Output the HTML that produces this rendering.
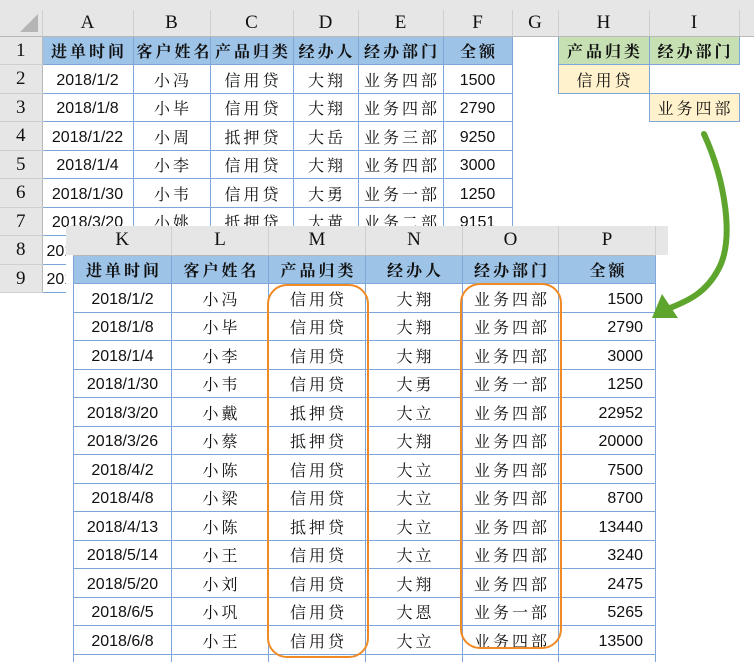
<!DOCTYPE html>
<html><head><meta charset="utf-8"><style>
*{margin:0;padding:0;box-sizing:border-box}
html,body{width:754px;height:662px;overflow:hidden}
body{background:#fff;position:relative;font-family:"Liberation Sans",sans-serif}
table{border-collapse:collapse;position:absolute;table-layout:fixed}
td{text-align:center;font-size:16px;color:#111;padding:0;padding-top:4px;white-space:nowrap;overflow:hidden}
td.cj{font-family:"Liberation Serif","Noto Serif CJK SC",serif;letter-spacing:3px;text-indent:3px;font-size:16px;padding-top:1px}
.b{font-weight:bold}
.ch td{background:#e6e6e6;font-family:"Liberation Serif",serif;font-size:19px;border-right:1px solid #cfcfcf;border-bottom:1px solid #b8b8b8;height:26px;padding-top:0}
td.rn{background:#e6e6e6;font-family:"Liberation Serif",serif;font-size:19px;padding-top:1px;border-bottom:1px solid #cfcfcf;border-right:1px solid #b8b8b8}
.t td.d{border:1px solid #7ea6d9}
.hb{background:#9dc3e6}
.r td{height:28.5px}
.num{text-align:right;padding-right:12px}
</style></head><body>
<div style="position:absolute;left:0;top:0;width:754px;height:10px;background:#e6e6e6"></div>
<table class="t" style="left:0;top:10px;width:754px">
<colgroup><col style="width:42px"><col style="width:91px"><col style="width:77px"><col style="width:83px"><col style="width:65px"><col style="width:85px"><col style="width:69px"><col style="width:46px"><col style="width:91px"><col style="width:90px"><col></colgroup>
<tr class="ch"><td style="position:relative"><div style="position:absolute;right:4px;bottom:4px;width:0;height:0;border-left:18px solid transparent;border-bottom:18px solid #b5b5b5"></div></td><td>A</td><td>B</td><td>C</td><td>D</td><td>E</td><td>F</td><td>G</td><td>H</td><td>I</td><td style="border-right:none"></td></tr>
<tr class="r"><td class="rn">1</td><td class="d hb cj b">进单时间</td><td class="d hb cj b">客户姓名</td><td class="d hb cj b">产品归类</td><td class="d hb cj b">经办人</td><td class="d hb cj b">经办部门</td><td class="d hb cj b">全额</td><td></td><td class="d cj b" style="background:#c6e0b4">产品归类</td><td class="d cj b" style="background:#c6e0b4">经办部门</td><td></td></tr>
<tr class="r"><td class="rn">2</td><td class="d">2018/1/2</td><td class="d cj">小冯</td><td class="d cj">信用贷</td><td class="d cj">大翔</td><td class="d cj">业务四部</td><td class="d">1500</td><td></td><td class="d cj" style="background:#fff2cc">信用贷</td><td></td><td></td></tr>
<tr class="r"><td class="rn">3</td><td class="d">2018/1/8</td><td class="d cj">小毕</td><td class="d cj">信用贷</td><td class="d cj">大翔</td><td class="d cj">业务四部</td><td class="d">2790</td><td></td><td></td><td class="d cj" style="background:#fff2cc">业务四部</td><td></td></tr>
<tr class="r"><td class="rn">4</td><td class="d">2018/1/22</td><td class="d cj">小周</td><td class="d cj">抵押贷</td><td class="d cj">大岳</td><td class="d cj">业务三部</td><td class="d">9250</td><td></td><td></td><td></td><td></td></tr>
<tr class="r"><td class="rn">5</td><td class="d">2018/1/4</td><td class="d cj">小李</td><td class="d cj">信用贷</td><td class="d cj">大翔</td><td class="d cj">业务四部</td><td class="d">3000</td><td></td><td></td><td></td><td></td></tr>
<tr class="r"><td class="rn">6</td><td class="d">2018/1/30</td><td class="d cj">小韦</td><td class="d cj">信用贷</td><td class="d cj">大勇</td><td class="d cj">业务一部</td><td class="d">1250</td><td></td><td></td><td></td><td></td></tr>
<tr class="r"><td class="rn">7</td><td class="d">2018/3/20</td><td class="d cj">小姚</td><td class="d cj">抵押贷</td><td class="d cj">大黄</td><td class="d cj">业务二部</td><td class="d">9151</td><td></td><td></td><td></td><td></td></tr>
<tr class="r"><td class="rn">8</td><td class="d" style="text-align:left;padding-left:4px">2018</td><td class="d"></td><td class="d"></td><td class="d"></td><td class="d"></td><td class="d"></td><td></td><td></td><td></td><td></td></tr>
<tr class="r"><td class="rn">9</td><td class="d" style="text-align:left;padding-left:4px">2018</td><td class="d"></td><td class="d"></td><td class="d"></td><td class="d"></td><td class="d"></td><td></td><td></td><td></td><td></td></tr>
</table>
<div style="position:absolute;left:66px;top:226px;width:602px;height:440px;background:#fff"></div>
<div style="position:absolute;left:66px;top:226px;width:602px;height:29px;background:#e6e6e6"></div>
<table class="t" style="left:73px;top:226px;width:582px">
<colgroup><col style="width:98px"><col style="width:97px"><col style="width:97px"><col style="width:97px"><col style="width:96px"><col style="width:97px"></colgroup>
<tr class="ch"><td style="height:29px">K</td><td>L</td><td>M</td><td>N</td><td>O</td><td>P</td></tr>
<tr class="r"><td class="d hb cj b">进单时间</td><td class="d hb cj b">客户姓名</td><td class="d hb cj b">产品归类</td><td class="d hb cj b">经办人</td><td class="d hb cj b">经办部门</td><td class="d hb cj b">全额</td></tr>
<tr class="r"><td class="d">2018/1/2</td><td class="d cj">小冯</td><td class="d cj">信用贷</td><td class="d cj">大翔</td><td class="d cj">业务四部</td><td class="d num">1500</td></tr>
<tr class="r"><td class="d">2018/1/8</td><td class="d cj">小毕</td><td class="d cj">信用贷</td><td class="d cj">大翔</td><td class="d cj">业务四部</td><td class="d num">2790</td></tr>
<tr class="r"><td class="d">2018/1/4</td><td class="d cj">小李</td><td class="d cj">信用贷</td><td class="d cj">大翔</td><td class="d cj">业务四部</td><td class="d num">3000</td></tr>
<tr class="r"><td class="d">2018/1/30</td><td class="d cj">小韦</td><td class="d cj">信用贷</td><td class="d cj">大勇</td><td class="d cj">业务一部</td><td class="d num">1250</td></tr>
<tr class="r"><td class="d">2018/3/20</td><td class="d cj">小戴</td><td class="d cj">抵押贷</td><td class="d cj">大立</td><td class="d cj">业务四部</td><td class="d num">22952</td></tr>
<tr class="r"><td class="d">2018/3/26</td><td class="d cj">小蔡</td><td class="d cj">抵押贷</td><td class="d cj">大翔</td><td class="d cj">业务四部</td><td class="d num">20000</td></tr>
<tr class="r"><td class="d">2018/4/2</td><td class="d cj">小陈</td><td class="d cj">信用贷</td><td class="d cj">大立</td><td class="d cj">业务四部</td><td class="d num">7500</td></tr>
<tr class="r"><td class="d">2018/4/8</td><td class="d cj">小梁</td><td class="d cj">信用贷</td><td class="d cj">大立</td><td class="d cj">业务四部</td><td class="d num">8700</td></tr>
<tr class="r"><td class="d">2018/4/13</td><td class="d cj">小陈</td><td class="d cj">抵押贷</td><td class="d cj">大立</td><td class="d cj">业务四部</td><td class="d num">13440</td></tr>
<tr class="r"><td class="d">2018/5/14</td><td class="d cj">小王</td><td class="d cj">信用贷</td><td class="d cj">大立</td><td class="d cj">业务四部</td><td class="d num">3240</td></tr>
<tr class="r"><td class="d">2018/5/20</td><td class="d cj">小刘</td><td class="d cj">信用贷</td><td class="d cj">大翔</td><td class="d cj">业务四部</td><td class="d num">2475</td></tr>
<tr class="r"><td class="d">2018/6/5</td><td class="d cj">小巩</td><td class="d cj">信用贷</td><td class="d cj">大恩</td><td class="d cj">业务一部</td><td class="d num">5265</td></tr>
<tr class="r"><td class="d">2018/6/8</td><td class="d cj">小王</td><td class="d cj">信用贷</td><td class="d cj">大立</td><td class="d cj">业务四部</td><td class="d num">13500</td></tr>
<tr><td class="d" style="height:10px"></td><td class="d"></td><td class="d"></td><td class="d"></td><td class="d"></td><td class="d"></td></tr>
</table>
<div style="position:absolute;left:267px;top:284px;width:102px;height:374px;border:2px solid #f08a24;border-radius:20px"></div>
<div style="position:absolute;left:460px;top:283px;width:102px;height:366px;border:2px solid #f08a24;border-radius:20px"></div>
<svg style="position:absolute;left:0;top:0" width="754" height="662">
<path d="M704 134 C725 180 735 240 718 270 C706 292 690 300 670 308" fill="none" stroke="#5ea52d" stroke-width="6" stroke-linecap="round"/>
<polygon points="652,318 662,294 678,318" fill="#5ea52d"/>
</svg>
</body></html>
